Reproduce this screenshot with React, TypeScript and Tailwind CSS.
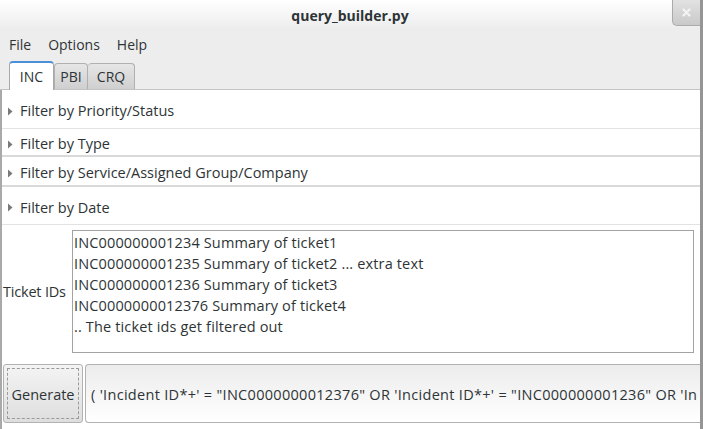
const FONT = "font-['Open_Sans',sans-serif]";

const FILTERS = [
  { label: "Filter by Priority/Status", h: "h-[39px]", sep: "border-b border-[#e2e2e2]" },
  { label: "Filter by Type", h: "h-[28px]", sep: "border-b-2 border-[#d9d9d9]" },
  { label: "Filter by Service/Assigned Group/Company", h: "h-[30px]", sep: "border-b-2 border-[#d9d9d9]" },
  { label: "Filter by Date", h: "h-[38px]", sep: "border-b border-[#e2e2e2]" },
];

const TICKETS = [
  "INC000000001234 Summary of ticket1",
  "INC000000001235 Summary of ticket2 ... extra text",
  "INC000000001236 Summary of ticket3",
  "INC0000000012376 Summary of ticket4",
  ".. The ticket ids get filtered out",
];

const QUERY =
  "( 'Incident ID*+' = \"INC0000000012376\" OR 'Incident ID*+' = \"INC000000001236\" OR 'In";

function Arrow() {
  return (
    <svg width="6" height="9" viewBox="0 0 6 9" className="shrink-0" aria-hidden="true">
      <path d="M1 0.5 L5.5 4.5 L1 8.5 Z" fill="#7a7a7a" />
    </svg>
  );
}

export default function App() {
  return (
    <div
      className={`${FONT} w-[703px] h-[429px] overflow-hidden flex flex-col bg-[#ededed] text-[#2e3436] text-[14.5px] border-r-[3px] border-[#959595]`}
    >
      {/* Title bar */}
      <div className="relative h-[30px] shrink-0 flex items-center justify-center bg-gradient-to-b from-white to-[#ececec]">
        <span className="font-bold text-[14px] text-[#2e3436]">query_builder.py</span>
        <div className="absolute right-0 top-0 w-[28px] h-[26px] rounded-bl-[5px] border-l border-b border-[#ababab] bg-gradient-to-b from-[#e2e2e2] to-[#c9c9c9] flex items-center justify-center">
          <svg width="9" height="9" viewBox="0 0 9 9" aria-hidden="true">
            <path d="M1.5 1.5 L7.5 7.5 M7.5 1.5 L1.5 7.5" stroke="#f4f4f4" strokeWidth="2.2" strokeLinecap="round" />
          </svg>
        </div>
      </div>

      {/* Menu bar */}
      <div className="h-[29px] shrink-0 flex items-center pl-[9px] gap-[17px] text-[14px]">
        <span>File</span>
        <span>Options</span>
        <span>Help</span>
      </div>

      {/* Tabs */}
      <div className="h-[31px] shrink-0 flex items-end pl-[9px] border-b border-[#c4c4c4] text-[14px]">
        <div className="h-[29px] w-[45px] -mb-px flex items-center justify-center bg-white rounded-t-[4px] border border-b-0 border-[#a8a8a8] border-t-2 border-t-[#4a90d9]">
          INC
        </div>
        <div className="h-[26px] w-[34px] flex items-center justify-center bg-gradient-to-b from-[#e6e6e6] to-[#cfcfcf] rounded-t-[4px] border border-b-0 border-[#b0b0b0]">
          PBI
        </div>
        <div className="h-[26px] w-[47px] flex items-center justify-center bg-gradient-to-b from-[#e6e6e6] to-[#cfcfcf] rounded-t-[4px] border border-b-0 border-l-0 border-[#b0b0b0]">
          CRQ
        </div>
      </div>

      {/* Notebook page */}
      <div className="flex-1 flex flex-col bg-white border-l-2 border-[#a9a9a9]">
        {FILTERS.map((f) => (
          <div key={f.label} className={`${f.h} ${f.sep} shrink-0 flex items-center gap-[7px] pl-[5px] pt-[4px]`}>
            <Arrow />
            <span>{f.label}</span>
          </div>
        ))}

        <div className="flex items-center pt-[5px] pr-[6px]">
          <span className="w-[70px] pl-[1px] shrink-0 tracking-[-0.2px]">Ticket IDs</span>
          <div className="flex-1 h-[123px] border border-[#a3a3a3] pl-[1px] pt-[1px] leading-[21px] tracking-[0.15px] overflow-hidden">
            {TICKETS.map((t) => (
              <div key={t} className="whitespace-nowrap">{t}</div>
            ))}
          </div>
        </div>

        <div className="flex gap-[2px] pl-[1px] pt-[11px]">
          <div className="w-[80px] h-[59px] shrink-0 rounded-[3px] border border-[#b2b2b2] bg-gradient-to-b from-[#f4f4f4] to-[#dedede] p-[3px]">
            <div className="w-full h-full border border-dashed border-[#9a9a9a] flex items-center justify-center pt-[2px]">
              Generate
            </div>
          </div>
          <div className="flex-1 min-w-0 h-[59px] rounded-l-[4px] border border-r-0 border-[#b2b2b2] bg-gradient-to-b from-[#ececec] to-white flex items-center pl-[5px] pt-[2px] overflow-hidden">
            <span className="whitespace-nowrap tracking-[0.3px]">{QUERY}</span>
          </div>
        </div>
      </div>
    </div>
  );
}
